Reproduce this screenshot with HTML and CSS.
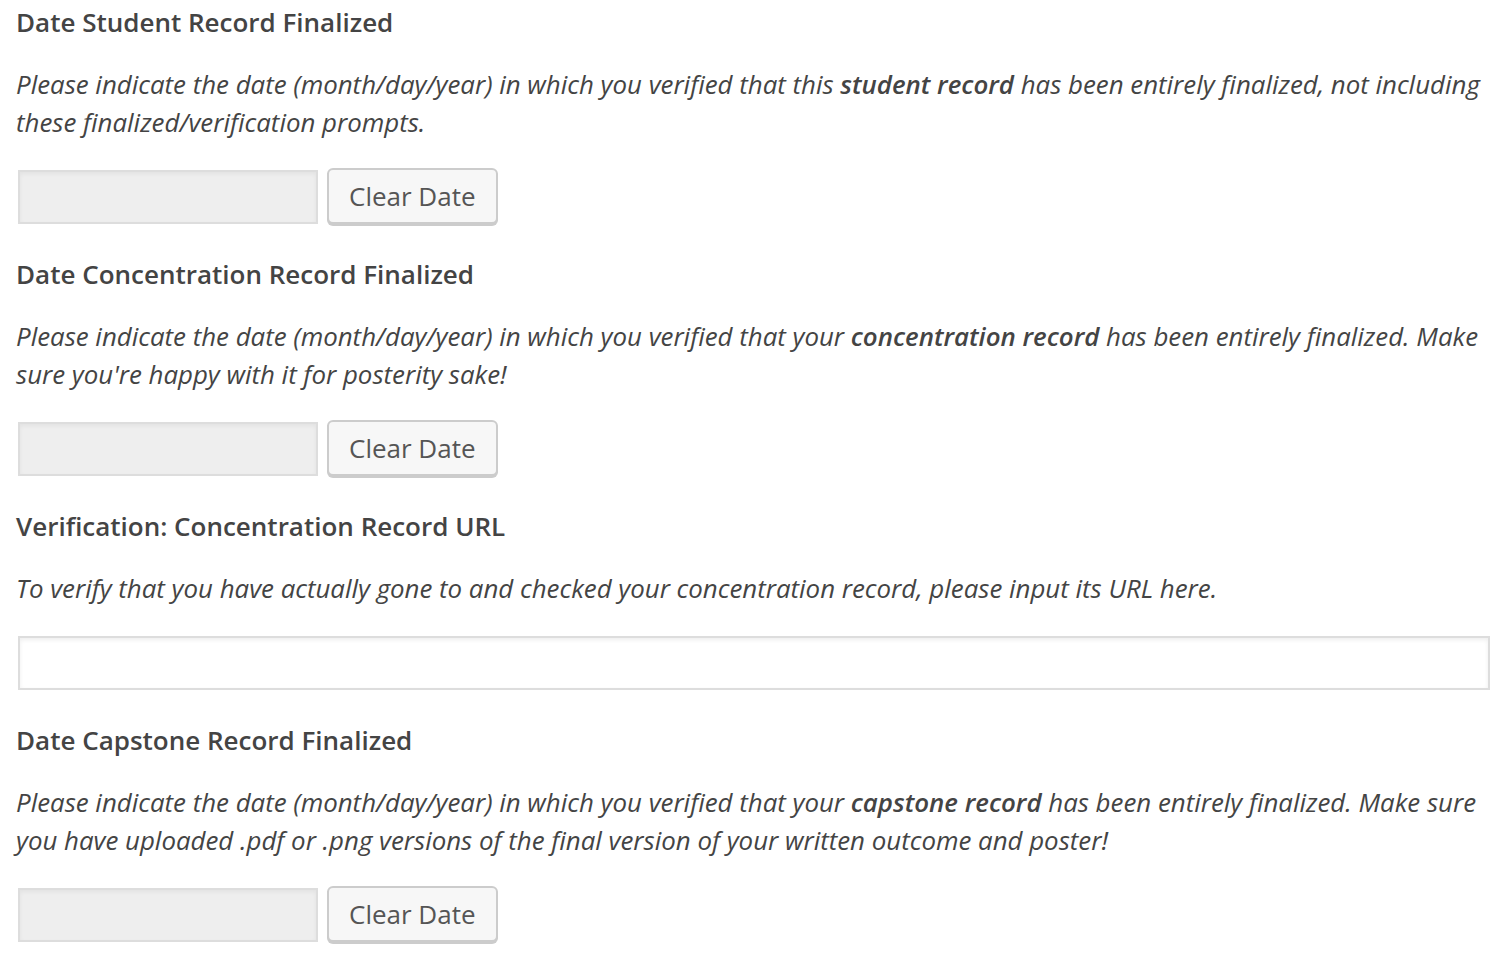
FILE: index.html
```html
<!DOCTYPE html>
<html>
<head>
<meta charset="utf-8">
<link rel="stylesheet" href="styles.css">
</head>
<body>
<div class="form">
  <div class="field">
    <h3 class="label">Date Student Record Finalized</h3>
    <p class="desc">Please indicate the date (month/day/year) in which you verified that this <strong>student record</strong> has been entirely finalized, not including these finalized/verification prompts.</p>
    <div class="date-row">
      <input class="date-input" type="text" readonly>
      <button class="btn" type="button">Clear Date</button>
    </div>
  </div>
  <div class="field">
    <h3 class="label">Date Concentration Record Finalized</h3>
    <p class="desc">Please indicate the date (month/day/year) in which you verified that your <strong>concentration record</strong> has been entirely finalized. Make sure you're happy with it for posterity sake!</p>
    <div class="date-row">
      <input class="date-input" type="text" readonly>
      <button class="btn" type="button">Clear Date</button>
    </div>
  </div>
  <div class="field">
    <h3 class="label">Verification: Concentration Record URL</h3>
    <p class="desc">To verify that you have actually gone to and checked your concentration record, please input its URL here.</p>
    <div class="url-row">
      <input class="url-input" type="text">
    </div>
  </div>
  <div class="field">
    <h3 class="label">Date Capstone Record Finalized</h3>
    <p class="desc">Please indicate the date (month/day/year) in which you verified that your <strong>capstone record</strong> has been entirely finalized. Make sure you have uploaded .pdf or .png versions of the final version of your written outcome and poster!</p>
    <div class="date-row">
      <input class="date-input" type="text" readonly>
      <button class="btn" type="button">Clear Date</button>
    </div>
  </div>
</div>
</body>
</html>
```
FILE: styles.css
```css
html, body {
  margin: 0;
  padding: 0;
  background: #fff;
}
body {
  font-family: "Open Sans", "Liberation Sans", sans-serif;
  color: #444;
}
.form {
  padding: 0 16px 0 16px;
}
.field {
  display: flex;
  flex-direction: column;
}
.label {
  margin: 0;
  font-size: 26px;
  font-weight: 600;
  line-height: 44px;
  color: #444;
}
.desc {
  margin: 21px 0 0 0;
  font-size: 25.85px;
  font-style: italic;
  line-height: 38px;
  color: #444;
}
.desc strong {
  font-weight: 600;
}
.date-row {
  display: flex;
  align-items: center;
  gap: 9px;
  margin-top: 29px;
  margin-bottom: 28px;
}
.date-input {
  box-sizing: border-box;
  width: 300px;
  height: 54px;
  margin: 0 0 0 2px;
  border: 2px solid #ddd;
  background: #eee;
  box-shadow: inset 0 2px 4px rgba(0,0,0,0.05);
  outline: none;
}
.btn {
  box-sizing: border-box;
  height: 56px;
  padding: 0 20px;
  border: 2px solid #ccc;
  border-radius: 6px;
  background: #f7f7f7;
  box-shadow: 0 2px 0 #ccc;
  font-family: "Open Sans", "Liberation Sans", sans-serif;
  font-size: 26px;
  color: #555;
  margin-top: -2px;
}
.url-row {
  display: flex;
  margin-top: 29px;
  margin-bottom: 28px;
}
.url-input {
  box-sizing: border-box;
  flex: 1;
  height: 54px;
  margin: 0 0 0 2px;
  border: 2px solid #ddd;
  background: #fff;
  box-shadow: inset 0 2px 4px rgba(0,0,0,0.07);
  outline: none;
}
```
